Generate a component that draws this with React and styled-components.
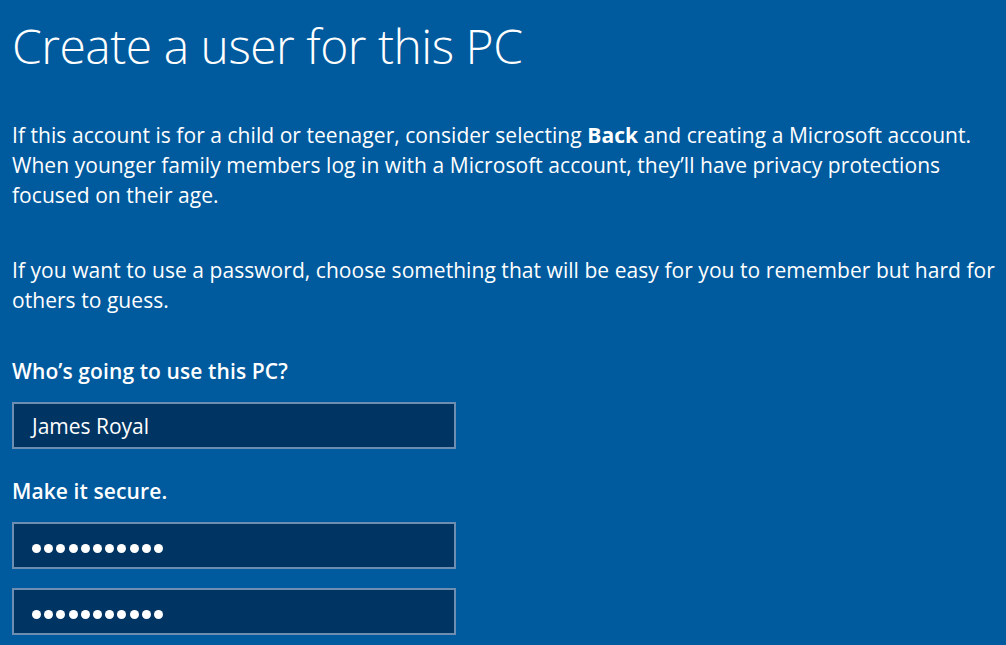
import React from "react";
import styled, { createGlobalStyle } from "styled-components";

const Global = createGlobalStyle`
  html, body {
    margin: 0;
    padding: 0;
    background: #005a9e;
  }
  body {
    font-family: "Open Sans", "Noto Sans", "Liberation Sans", sans-serif;
    color: #ffffff;
  }
`;

const Page = styled.div`
  width: 1006px;
  height: 645px;
  overflow: hidden;
  background: #005a9e;
  padding: 0 12px;
  box-sizing: border-box;
`;

const Title = styled.h1`
  margin: 0;
  padding-top: 15px;
  font-weight: 300;
  font-size: 48px;
  line-height: 62px;
  letter-spacing: -0.5px;
`;

const Para = styled.p`
  margin: 0;
  margin-top: ${p => p.$top || 0}px;
  font-size: 21px;
  line-height: 30px;
  letter-spacing: 0.05px;
  white-space: nowrap;
  b {
    font-weight: 700;
  }
`;

const Label = styled.div`
  margin-top: ${p => p.$top || 0}px;
  font-size: 21px;
  font-weight: 600;
  line-height: 26px;
  letter-spacing: 0.1px;
`;

const Field = styled.div`
  width: 444px;
  height: 47px;
  margin-top: ${p => p.$top || 0}px;
  box-sizing: border-box;
  background: #003563;
  border: 2px solid #6d8eb0;
  display: flex;
  align-items: center;
  padding: 0 18px;
  font-size: 21px;
`;

const Dots = styled.div`
  display: flex;
  gap: 3.2px;
  padding-top: 6px;
`;

const Dot = styled.span`
  width: 9px;
  height: 9px;
  border-radius: 50%;
  background: #ffffff;
`;

const PasswordDots = ({ count }) => (
  <Dots>
    {Array.from({ length: count }).map((_, i) => (
      <Dot key={i} />
    ))}
  </Dots>
);

export default function App() {
  return (
    <>
      <Global />
      <Page>
        <Title>Create a user for this PC</Title>
        <Para $top={43}>
          If this account is for a child or teenager, consider selecting <b>Back</b> and creating a Microsoft account.
          <br />
          When younger family members log in with a Microsoft account, they’ll have privacy protections
          <br />
          focused on their age.
        </Para>
        <Para $top={45}>
          If you want to use a password, choose something that will be easy for you to remember but hard for
          <br />
          others to guess.
        </Para>
        <Label $top={43}>Who’s going to use this PC?</Label>
        <Field $top={18}>James Royal</Field>
        <Label $top={29}>Make it secure.</Label>
        <Field $top={18}>
          <PasswordDots count={11} />
        </Field>
        <Field $top={19}>
          <PasswordDots count={11} />
        </Field>
      </Page>
    </>
  );
}
